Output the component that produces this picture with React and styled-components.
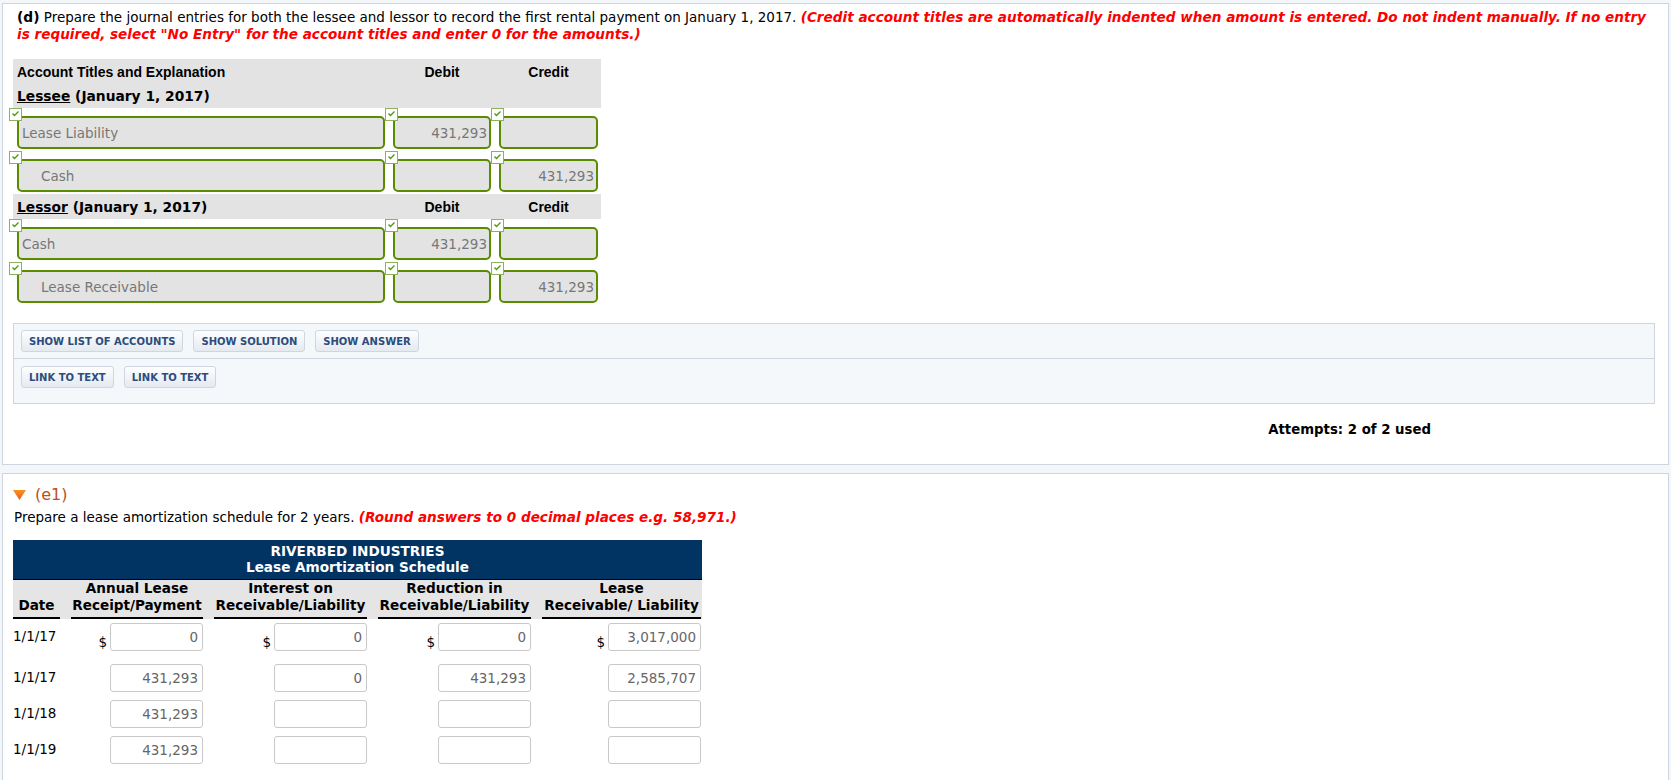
import React from 'react';
import styled, { createGlobalStyle } from 'styled-components';

const GlobalStyle = createGlobalStyle`
  html, body { margin: 0; padding: 0; background: #f4f7fa; }
  body {
    font-family: "DejaVu Sans", Verdana, sans-serif;
    font-size: 13.5px;
    color: #000;
  }
`;

const Page = styled.div`
  padding: 3px 2px 0 2px;
`;

const Panel = styled.section`
  background: #fff;
  border: 1px solid #cdd6e0;
  padding: ${p => p.$pad};
  & + & { margin-top: 8px; }
`;

const Instructions = styled.div`
  padding-left: 4px;
  line-height: 17px;
`;

const Line = styled.div`
  white-space: nowrap;
`;

const Strong = styled.b`
  font-size: 13.8px;
`;

const Red = styled.span`
  color: #f00;
  font-weight: bold;
  font-style: italic;
  font-size: 13.6px;
`;

/* journal entry table */
const jCols = '368px 98px 99px';

const Journal = styled.div`
  width: 588px;
  margin-top: 16px;
`;

const HeadRow = styled.div`
  display: grid;
  grid-template-columns: ${jCols};
  column-gap: 8px;
  align-items: center;
  height: ${p => p.$h}px;
  padding: 0 3px 0 4px;
  background: #e3e3e3;
`;

const ColTitle = styled.div`
  font-family: "Liberation Sans", Arial, sans-serif;
  font-weight: bold;
  font-size: 14px;
  text-align: ${p => (p.$center ? 'center' : 'left')};
`;

const PartyTitle = styled.div`
  font-weight: bold;
  font-size: 13.8px;
  u { text-decoration: underline; }
`;

const EntryRow = styled.div`
  display: grid;
  grid-template-columns: ${jCols};
  column-gap: 8px;
  padding: 8px 3px 2px 4px;
`;

const Field = styled.div`
  position: relative;
  box-sizing: border-box;
  height: 33px;
  display: flex;
  align-items: center;
  justify-content: ${p => (p.$num ? 'flex-end' : 'flex-start')};
  padding: ${p => (p.$num ? '0 2px 0 0' : p.$indent ? '0 0 0 22px' : '0 0 0 3px')};
  border: 2px solid #5b8c00;
  border-radius: 5px;
  background: #e3e3e3;
  color: #777;
  font-size: 13.5px;
`;

const CheckMark = styled.svg`
  position: absolute;
  left: -10px;
  top: -10px;
`;

const Check = () => (
  <CheckMark width="13" height="13" viewBox="0 0 13 13">
    <rect x="0.5" y="0.5" width="12" height="12" fill="#fff" stroke="#8db35a" />
    <polyline points="3.5,5.5 5.5,7.5 9.5,3.5" fill="none" stroke="#4f9a10" strokeWidth="1.4" />
  </CheckMark>
);

/* buttons box */
const ToolBox = styled.div`
  margin-top: 18px;
  border: 1px solid #cdd6e0;
  background: #f5f8fb;
`;

const ToolRow = styled.div`
  display: flex;
  gap: 10px;
  padding: ${p => p.$pad};
  & + & { border-top: 1px solid #cdd6e0; }
`;

const ToolButton = styled.button`
  height: 22px;
  padding: 0 7px;
  border: 1px solid #cfd6df;
  border-radius: 3px;
  background: linear-gradient(#fdfeff, #e5eaf0);
  color: #2c4c7c;
  font-family: "DejaVu Sans", Verdana, sans-serif;
  font-weight: bold;
  font-size: 10px;
  cursor: pointer;
`;

const Attempts = styled.div`
  display: flex;
  justify-content: flex-end;
  padding-right: 224px;
  margin-top: 17px;
  font-weight: bold;
  font-size: 13.3px;
  line-height: 17px;
`;

/* part e1 */
const PartHead = styled.div`
  display: flex;
  align-items: center;
  gap: 9px;
  color: #b9501c;
  font-size: 16px;
  line-height: 20px;
`;

const Prompt = styled.p`
  margin: 4px 0 0;
  padding-left: 1px;
  line-height: 17px;
`;

const sCols = '47px 132px 153px 153px 159px';

const Schedule = styled.div`
  width: 689px;
  margin-top: 14px;
`;

const Banner = styled.div`
  background: #013462;
  color: #fff;
  text-align: center;
  font-weight: bold;
  font-size: 13.6px;
  line-height: 16px;
  padding: 3px 0 4px;
  border-bottom: 1px solid #000;
`;

const ColHeads = styled.div`
  display: grid;
  grid-template-columns: ${sCols};
  column-gap: 11px;
  background: #e5e5e5;
`;

const ColHead = styled.div`
  display: flex;
  align-items: flex-end;
  justify-content: center;
  text-align: center;
  padding-bottom: 3px;
  border-bottom: 2px solid #000;
  font-weight: bold;
  font-size: 13.6px;
  line-height: 17px;
`;

const SchedRow = styled.div`
  display: grid;
  grid-template-columns: ${sCols};
  column-gap: 11px;
  align-items: start;
  padding: 4px 0 ${p => (p.$first ? 9 : 4)}px;
`;

const DateCell = styled.div`
  padding-top: 5px;
  line-height: 17px;
`;

const AmountCell = styled.div`
  display: flex;
  justify-content: flex-end;
  align-items: flex-end;
`;

const Dollar = styled.span`
  margin-right: 3px;
  line-height: 17px;
`;

const AmountInput = styled.input`
  box-sizing: border-box;
  width: 93px;
  height: 28px;
  padding: 0 4px;
  border: 1px solid #c9c9c9;
  border-radius: 3px;
  background: #fff;
  color: #666;
  text-align: right;
  font-family: "DejaVu Sans", Verdana, sans-serif;
  font-size: 13.5px;
`;

const Triangle = () => (
  <svg width="13" height="10" viewBox="0 0 13 10">
    <defs>
      <linearGradient id="tri" x1="0" y1="0" x2="0" y2="1">
        <stop offset="0" stopColor="#f7941d" />
        <stop offset="1" stopColor="#ee5a1f" />
      </linearGradient>
    </defs>
    <polygon points="0,0 13,0 6.5,10" fill="url(#tri)" />
  </svg>
);

const entries = {
  lessee: [
    { account: 'Lease Liability', debit: '431,293', credit: '' },
    { account: 'Cash', debit: '', credit: '431,293', indent: true },
  ],
  lessor: [
    { account: 'Cash', debit: '431,293', credit: '' },
    { account: 'Lease Receivable', debit: '', credit: '431,293', indent: true },
  ],
};

const schedule = [
  { date: '1/1/17', values: ['0', '0', '0', '3,017,000'], dollar: true },
  { date: '1/1/17', values: ['431,293', '0', '431,293', '2,585,707'] },
  { date: '1/1/18', values: ['431,293', '', '', ''] },
  { date: '1/1/19', values: ['431,293', '', '', ''] },
];

const Entry = ({ account, debit, credit, indent }) => (
  <EntryRow>
    <Field $indent={indent}><Check />{account}</Field>
    <Field $num><Check />{debit}</Field>
    <Field $num><Check />{credit}</Field>
  </EntryRow>
);

export default function App() {
  return (
    <Page>
      <GlobalStyle />
      <Panel $pad="5px 13px 26px 10px">
        <Instructions>
          <Line>
            <Strong>(d)</Strong> Prepare the journal entries for both the lessee and lessor to record the first rental payment on January 1, 2017.{' '}
            <Red>(Credit account titles are automatically indented when amount is entered. Do not indent manually. If no entry</Red>
          </Line>
          <Line>
            <Red>is required, select "No Entry" for the account titles and enter 0 for the amounts.)</Red>
          </Line>
        </Instructions>

        <Journal>
          <HeadRow $h={25}>
            <ColTitle>Account Titles and Explanation</ColTitle>
            <ColTitle $center>Debit</ColTitle>
            <ColTitle $center>Credit</ColTitle>
          </HeadRow>
          <HeadRow $h={24}>
            <PartyTitle><u>Lessee</u> (January 1, 2017)</PartyTitle>
          </HeadRow>
          {entries.lessee.map((e, i) => <Entry key={i} {...e} />)}
          <HeadRow $h={25}>
            <PartyTitle><u>Lessor</u> (January 1, 2017)</PartyTitle>
            <ColTitle $center>Debit</ColTitle>
            <ColTitle $center>Credit</ColTitle>
          </HeadRow>
          {entries.lessor.map((e, i) => <Entry key={i} {...e} />)}
        </Journal>

        <ToolBox>
          <ToolRow $pad="6px 7px 6px">
            <ToolButton>SHOW LIST OF ACCOUNTS</ToolButton>
            <ToolButton>SHOW SOLUTION</ToolButton>
            <ToolButton>SHOW ANSWER</ToolButton>
          </ToolRow>
          <ToolRow $pad="7px 7px 15px">
            <ToolButton>LINK TO TEXT</ToolButton>
            <ToolButton>LINK TO TEXT</ToolButton>
          </ToolRow>
        </ToolBox>

        <Attempts>Attempts: 2 of 2 used</Attempts>
      </Panel>

      <Panel $pad="11px 13px 40px 10px">
        <PartHead><Triangle />(e1)</PartHead>
        <Prompt>
          Prepare a lease amortization schedule for 2 years.{' '}
          <Red>(Round answers to 0 decimal places e.g. 58,971.)</Red>
        </Prompt>

        <Schedule>
          <Banner>
            RIVERBED INDUSTRIES<br />
            Lease Amortization Schedule
          </Banner>
          <ColHeads>
            <ColHead>Date</ColHead>
            <ColHead>Annual Lease<br />Receipt/Payment</ColHead>
            <ColHead>Interest on<br />Receivable/Liability</ColHead>
            <ColHead>Reduction in<br />Receivable/Liability</ColHead>
            <ColHead>Lease<br />Receivable/ Liability</ColHead>
          </ColHeads>
          {schedule.map((row, r) => (
            <SchedRow key={r} $first={r === 0}>
              <DateCell>{row.date}</DateCell>
              {row.values.map((v, c) => (
                <AmountCell key={c}>
                  {row.dollar && <Dollar>$</Dollar>}
                  <AmountInput readOnly value={v} />
                </AmountCell>
              ))}
            </SchedRow>
          ))}
        </Schedule>
      </Panel>
    </Page>
  );
}
